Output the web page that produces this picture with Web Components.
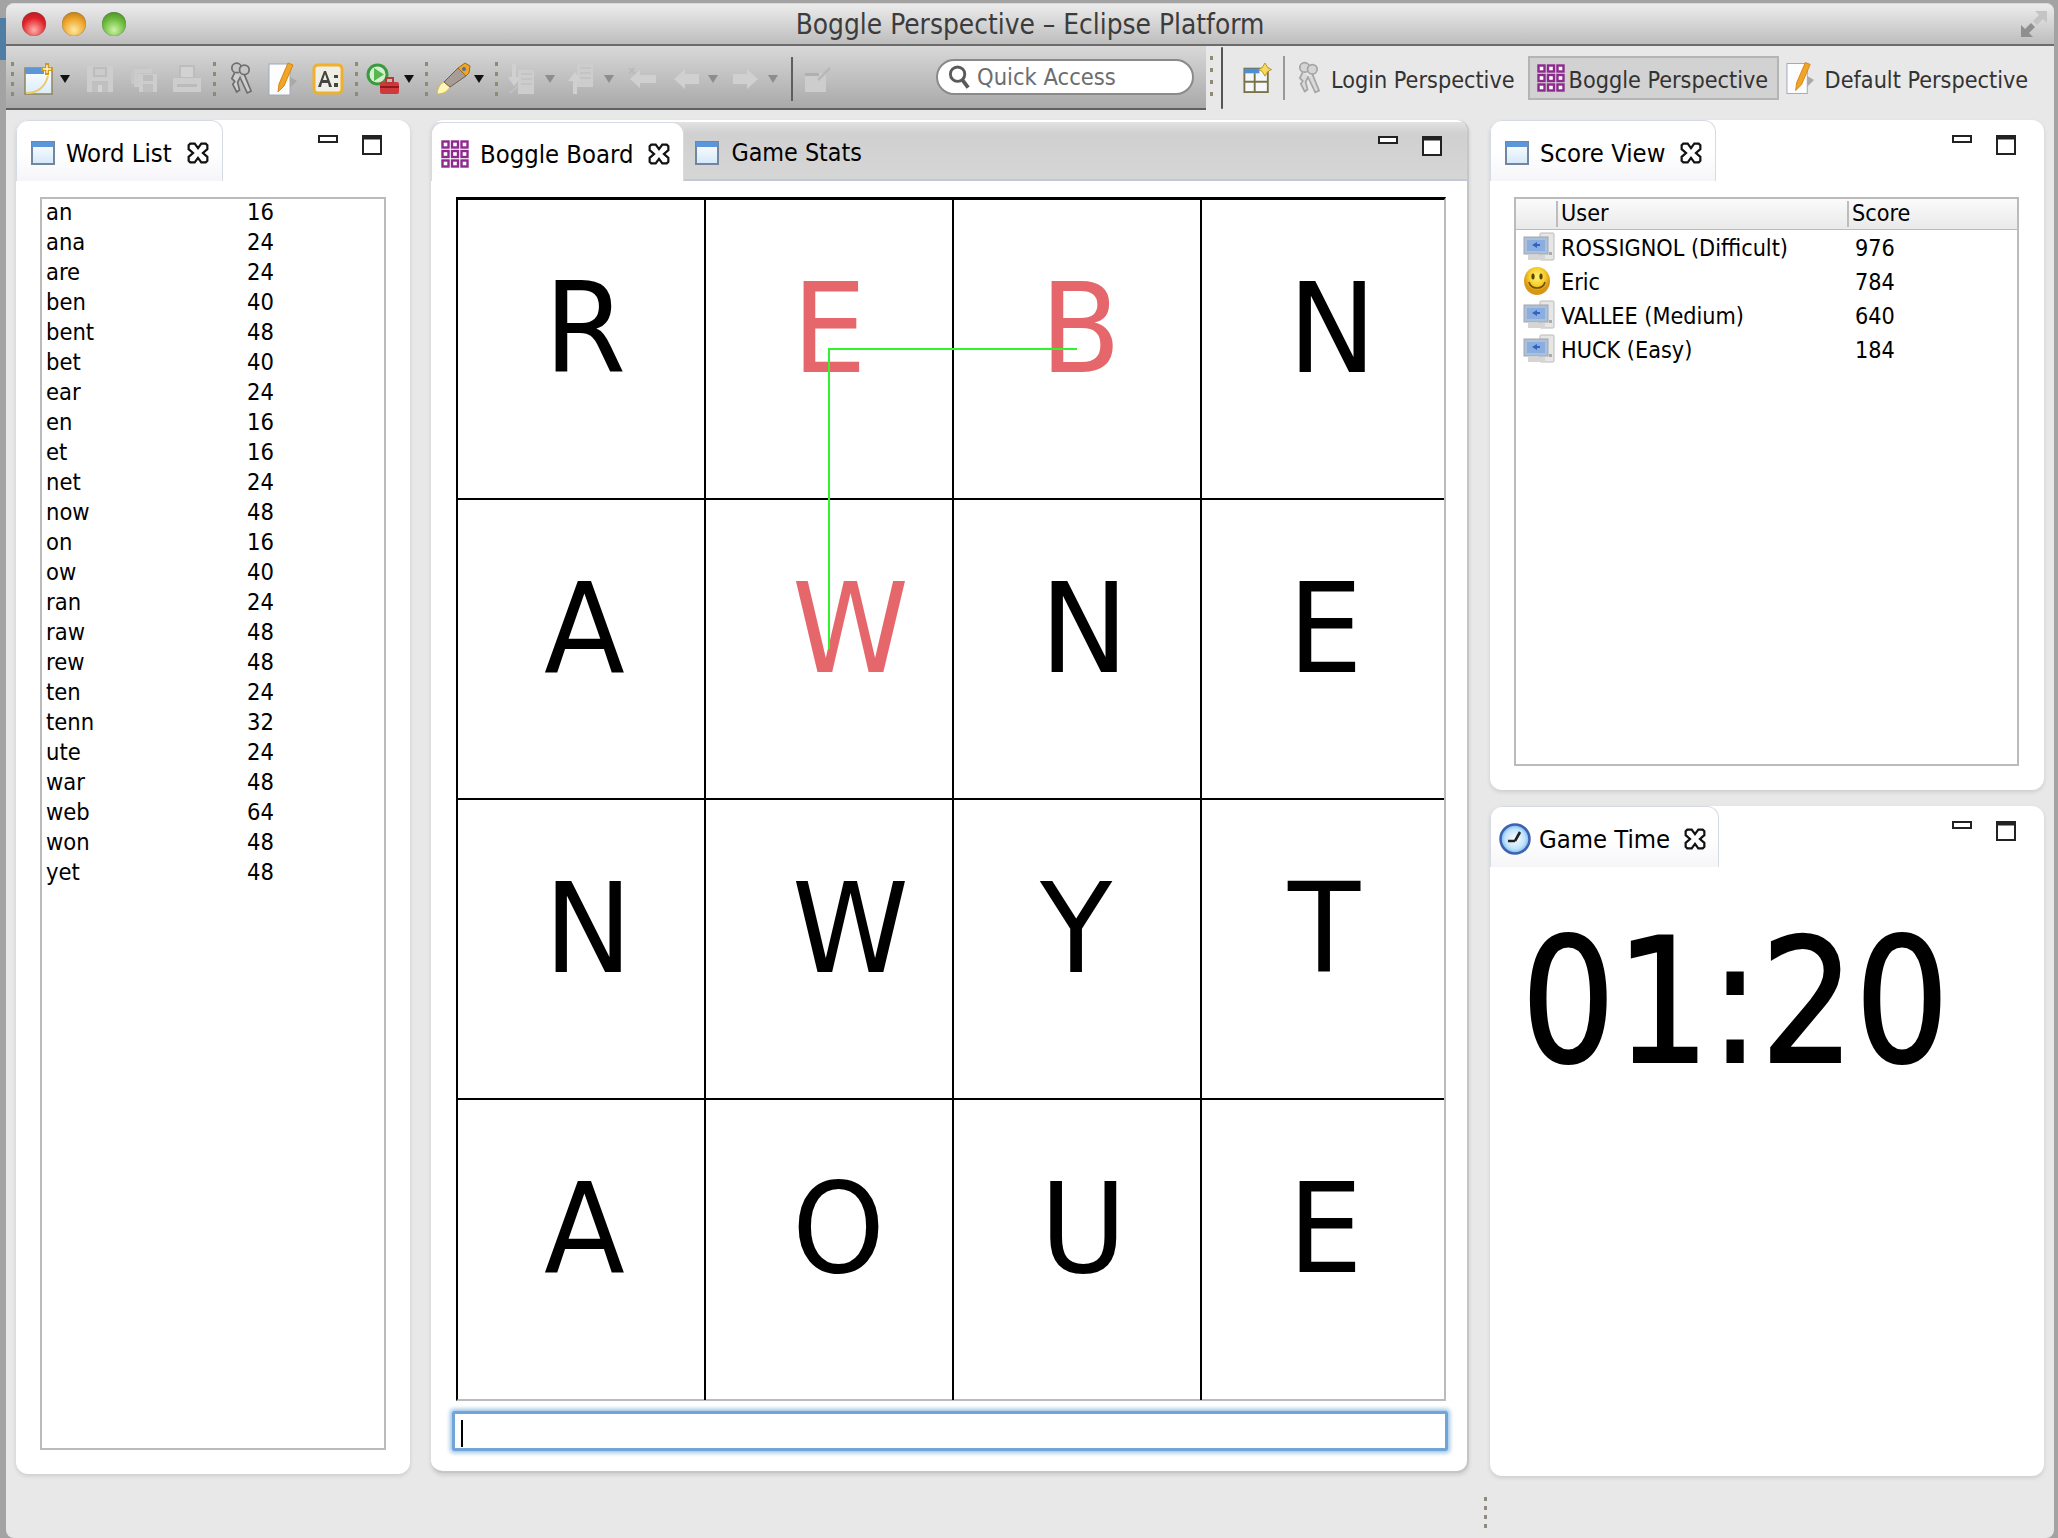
<!DOCTYPE html>
<html>
<head>
<meta charset="utf-8">
<title>Boggle Perspective - Eclipse Platform</title>
<style>
    html, body { margin: 0; height: 100%; overflow: hidden; }
    body {
        width: 2058px;
        height: 1538px;
        padding: 3px 4px 0 6px;
        box-sizing: border-box;
        background: linear-gradient(#4f7da3, #4f7da3) 0 18px / 6px 42px no-repeat, #a3a3a3;
        font-family: "DejaVu Sans", sans-serif;
        font-stretch: condensed;
        font-size: 23.5px;
    }
</style>
</head>
<body>
<eclipse-window>
    <title-bar>Boggle Perspective – Eclipse Platform</title-bar>
    <div slot="bars" style="display:flex">
        <main-toolbar></main-toolbar>
        <perspective-bar></perspective-bar>
    </div>
    <view-panel slot="left" tab="Word List" icon="window" style="width:394px;height:1354px">
        <word-list></word-list>
    </view-panel>
    <view-panel slot="center" tab="Boggle Board" icon="grid" extra="Game Stats" style="width:1038px;height:1353px">
        <boggle-board letters="REBNAWNENWYTAOUE" marked="1,2,5"></boggle-board>
    </view-panel>
    <view-panel slot="right" tab="Score View" icon="window" style="width:554px;height:670px">
        <score-table></score-table>
    </view-panel>
    <view-panel slot="right" tab="Game Time" icon="clock" style="width:554px;height:670px">
        <game-timer>01:20</game-timer>
    </view-panel>
</eclipse-window>

<script>
const gripDots = (n, gap) => {
    let dots = '';
    for (let i = 0; i < n; i++) {
        dots += `<rect x="1" y="${i * gap}" width="3" height="4" fill="#8f8b70"/>`;
    }
    return dots;
};

const computerIcon = `<svg viewBox="0 0 32 30"><rect x="17" y="1" width="14" height="27" rx="1" fill="#e6e6e6" stroke="#bbb"/><rect x="26" y="20" width="3" height="3" fill="#aaa"/><rect x="1" y="5" width="24" height="17" fill="#a9c0df" stroke="#a5a5a5"/><rect x="4" y="8" width="18" height="11" fill="#8caede"/><path d="M9 13l5-3v2h3v2h-3v2z" fill="#2f64c4"/><rect x="5" y="23" width="17" height="5" fill="#d5d5d5"/></svg>`;

const ICONS = {
    window: `<svg viewBox="0 0 24 24"><defs><linearGradient id="a" x1="0" y1="0" x2="0" y2="1"><stop offset="0" stop-color="#fff"/><stop offset="1" stop-color="#d4e8f8"/></linearGradient></defs><rect x="1" y="1" width="22" height="22" fill="url(#a)" stroke="#73869f" stroke-width="2"/><rect x="1" y="1" width="22" height="5" fill="#5a96d8"/></svg>`,
    grid: `<svg viewBox="0 0 28 28"><g fill="#fff" stroke="#8e2a8e" stroke-width="2.4"><rect x="1.5" y="1.5" width="6" height="6"/><rect x="11" y="1.5" width="6" height="6"/><rect x="20.5" y="1.5" width="6" height="6"/><rect x="1.5" y="11" width="6" height="6"/><rect x="11" y="11" width="6" height="6"/><rect x="20.5" y="11" width="6" height="6"/><rect x="1.5" y="20.5" width="6" height="6"/><rect x="11" y="20.5" width="6" height="6"/><rect x="20.5" y="20.5" width="6" height="6"/></g></svg>`,
    close: `<svg viewBox="0 0 20 20"><path d="M3 1.5H7L10 5.5 13 1.5H17L18.5 3V6.5L14.5 10 18.5 13.5V17L17 18.5H13L10 14.5 7 18.5H3L1.5 17V13.5L5.5 10 1.5 6.5V3Z" fill="#fff" stroke="#111" stroke-width="2"/></svg>`,
    min: `<svg viewBox="0 0 20 8"><rect x="1" y="1" width="18" height="6" fill="#fff" stroke="#222" stroke-width="2"/></svg>`,
    max: `<svg viewBox="0 0 20 20"><rect x="1" y="1" width="18" height="18" fill="#fff" stroke="#222" stroke-width="2"/><rect x="1" y="1" width="18" height="3.5" fill="#222"/></svg>`,
    clock: `<svg viewBox="0 0 32 32"><defs><radialGradient id="c"><stop offset="0" stop-color="#fff"/><stop offset=".7" stop-color="#bfe2fb"/><stop offset="1" stop-color="#6fb3ee"/></radialGradient></defs><circle cx="16" cy="16" r="14.5" fill="url(#c)" stroke="#3d62b0" stroke-width="2.5"/><path d="M16 18L21 9M16 18H9" stroke="#222" stroke-width="2.6" fill="none"/></svg>`,
    smile: `<svg viewBox="0 0 28 30"><defs><radialGradient id="s" cy=".35"><stop offset="0" stop-color="#fff27a"/><stop offset=".6" stop-color="#f8d02c"/><stop offset="1" stop-color="#d99616"/></radialGradient></defs><ellipse cx="14" cy="15" rx="13" ry="14" fill="url(#s)"/><ellipse cx="10" cy="10.5" rx="1.6" ry="3" fill="#5a4300"/><ellipse cx="18" cy="10.5" rx="1.6" ry="3" fill="#5a4300"/><path d="M6 16c2 8 14 8 16 0" fill="none" stroke="#6b5200" stroke-width="1.6"/></svg>`,
    computer: computerIcon,
    wizard: `<svg viewBox="0 0 30 32"><defs><linearGradient id="w" x1="0" y1="0" x2="0" y2="1"><stop offset="0" stop-color="#fff"/><stop offset="1" stop-color="#d8ecfa"/></linearGradient></defs><rect x="1" y="5" width="27" height="26" fill="url(#w)" stroke="#8f8660" stroke-width="1.5"/><rect x="1" y="5" width="19" height="6" fill="#5d95d6"/><path d="M2 30c12 0 19-6 22-17" fill="none" stroke="#eccb68" stroke-width="2"/><path d="M23 0v12M17 6h12" stroke="#d09a1c" stroke-width="4"/><path d="M23 2v8M19 6h8" stroke="#fff6d0" stroke-width="1.4"/></svg>`,
    save: `<svg viewBox="0 0 28 28"><path d="M1 1H27V27H1Z" fill="#cdcdcd"/><rect x="7" y="2" width="14" height="10" fill="#bdbdbd"/><rect x="9" y="4" width="10" height="6" fill="#cbcbcb"/><rect x="6" y="16" width="16" height="11" fill="#c0c0c0"/><rect x="12" y="20" width="4" height="7" fill="#d4d4d4"/></svg>`,
    saveall: `<svg viewBox="0 0 28 28"><path d="M1 1H18V5H6V19H1Z" fill="#c6c6c6"/><path d="M4 4H22V8H9V22H4Z" fill="#cbcbcb"/><path d="M9 9H27V27H9Z" fill="#cdcdcd"/><rect x="13" y="10" width="10" height="6" fill="#bdbdbd"/><rect x="13" y="19" width="10" height="8" fill="#bfbfbf"/></svg>`,
    print: `<svg viewBox="0 0 30 28"><path d="M8 1H22V13H8Z" fill="#d2d2d2" stroke="#bdbdbd" stroke-width="2"/><path d="M1 13H29V27H1Z" fill="#cdcdcd"/><rect x="5" y="19" width="20" height="3" fill="#bbb"/></svg>`,
    keys: `<svg viewBox="0 0 26 34"><g fill="none" stroke="#6f6f6f" stroke-width="1.8"><circle cx="9" cy="6" r="5" fill="#c6c6c6"/><circle cx="17" cy="8" r="5" fill="#c6c6c6"/><path d="M7 11L4 17l3 3-2 3 4 8 3-2-2-8 3-6M17 13l7 17-4 2-7-15" fill="#cfcfcf"/></g></svg>`,
    note: `<svg viewBox="0 0 30 34"><rect x="1" y="2" width="21" height="31" fill="#fdfdfd" stroke="#9ea8ba"/><path d="M22 15l7 4-7 7z" fill="#a9a9a9"/><path d="M20 1l5 2-9 21-6 6 1-8z" fill="#f0a428" stroke="#d8861a"/></svg>`,
    textbox: `<svg viewBox="0 0 32 32"><rect x="2" y="2" width="28" height="28" rx="4" fill="#efefe6" stroke="#f0b02c" stroke-width="3"/><path d="M6 24L12 8h2l6 16h-3l-1-4h-6l-1 4zM11 17h4l-2-6z" fill="#444"/><path d="M22 12h4v3h-4zM22 20h4v4h-4z" fill="#444"/></svg>`,
    run: `<svg viewBox="0 0 33 31"><circle cx="11.500" cy="11.500" r="11" fill="#3b9a3f"/><circle cx="11.500" cy="11.500" r="8" fill="#d6f0cf"/><path d="M8 5l10 6.500-10 6.500z" fill="#52b84f"/><rect x="14" y="19" width="19" height="12" rx="2" fill="#d0383c"/><rect x="20" y="15" width="7" height="5" fill="none" stroke="#b8383c" stroke-width="2"/><rect x="14" y="23" width="19" height="2" fill="#8e1a1e"/></svg>`,
    brush: `<svg viewBox="0 0 35 33"><path d="M1 32c1-7 3-10 7-12l6 5c-3 5-7 7-13 7z" fill="#fff6b8" stroke="#d8b840"/><path d="M8 20L22 6l8 8-16 11z" fill="#a89c96" stroke="#6e5e50"/><path d="M22 6l7-5 5 3-1 7-3 3z" fill="#f0a428" stroke="#9c6c12"/><circle cx="28" cy="7" r="2" fill="#4a6fb5"/></svg>`,
    nextann: `<svg viewBox="0 0 26 31"><rect x="10" y="7" width="16" height="24" fill="#cdcdcd"/><path d="M13 11h11M13 16h11M13 21h11" stroke="#bbb"/><path d="M8 1v13h5l-7 9-6-9h4V1z" fill="#d0d0d0"/><path d="M2 30l8-7" stroke="#c0c0c0" stroke-width="2"/></svg>`,
    prevann: `<svg viewBox="0 0 26 31"><rect x="10" y="1" width="16" height="23" fill="#cdcdcd"/><path d="M13 5h11M13 10h11M13 15h11" stroke="#bbb"/><path d="M6 31V18H1l7-9 6 9h-4v13z" fill="#d0d0d0"/></svg>`,
    backedit: `<svg viewBox="0 0 30 24"><path d="M3 12l10-9v5h16v8H13v5z" fill="#d0d0d0"/><path d="M2 1l6 6M7 1L2 7" stroke="#b8b8b8" stroke-width="1.500"/></svg>`,
    back: `<svg viewBox="0 0 26 22"><path d="M1 11L12 1v5h14v10H12v5z" fill="#d0d0d0"/></svg>`,
    forward: `<svg viewBox="0 0 26 22"><path d="M25 11L14 1v5H0v10h14v5z" fill="#d0d0d0"/></svg>`,
    pin: `<svg viewBox="0 0 26 26"><rect x="0" y="7" width="21" height="19" fill="#cdcdcd"/><rect x="0" y="7" width="14" height="3" fill="#b0b0b0"/><path d="M13 14L25 2" stroke="#b8b8b8" stroke-width="2.500"/></svg>`,
    perspective: `<svg viewBox="0 0 30 32"><rect x="1" y="6" width="25" height="25" fill="#f4f8fb" stroke="#7b7346" stroke-width="2"/><rect x="1" y="6" width="16" height="5" fill="#4f8ed6"/><path d="M1 20H26M12 11V31" stroke="#7b7346" stroke-width="2"/><path d="M23 0l3 5 4 2-4 2-3 5-3-5-4-2 4-2z" fill="#f7d860" stroke="#b8941c"/></svg>`,
    search: `<svg viewBox="0 0 24 26"><circle cx="10" cy="10" r="7.500" fill="#fff" stroke="#5a5a5a" stroke-width="3"/><path d="M15 16l6 8" stroke="#5a5a5a" stroke-width="4"/></svg>`,
    expand: `<svg viewBox="0 0 28 28"><path d="M15 1H27V13L23 9 17 15 13 11 19 5z" fill="#c4c4c4"/><path d="M13 27H1V15L5 19 11 13 15 17 9 23z" fill="#8f8f8f"/></svg>`
};

class UiIcon extends HTMLElement {
    constructor() {
        super();
        this.attachShadow({ mode: 'open' });
        const size = this.getAttribute('size') || '24';
        const [w, h] = size.split('x');
        this.shadowRoot.innerHTML = `
            <style>
                :host { display: inline-block; width: ${w}px; height: ${h || w}px; flex: none; line-height: 0; }
                svg { width: 100%; height: 100%; display: block; }
            </style>
            ${ICONS[this.getAttribute('name')] || ''}
        `;
    }
}

class TitleBar extends HTMLElement {
    constructor() {
        super();
        this.attachShadow({ mode: 'open' });
        this.shadowRoot.innerHTML = `
            <style>
                :host {
                    display: flex;
                    align-items: center;
                    height: 40px;
                    border-top: 1px solid #d8d8d8;
                    border-bottom: 2px solid #6c6c6c;
                    border-radius: 8px 8px 0 0;
                    background: linear-gradient(#ececec, #bdbdbd);
                    color: #3c3c3c;
                    padding-left: 16px;
                }
                .lights { display: flex; gap: 16px; }
                .light { width: 24px; height: 24px; border-radius: 50%; box-shadow: 0 0 1px #555 inset; }
                .red { background: radial-gradient(circle at 50% 75%, #ffb0a8, #e0222a 55%, #a01820); }
                .amber { background: radial-gradient(circle at 50% 75%, #ffe9a0, #eda227 55%, #a86c12); }
                .green { background: radial-gradient(circle at 50% 75%, #ccf3a6, #69b83a 55%, #3f7d20); }
                .text { position: absolute; left: 0; right: 0; text-align: center; font-size: 27.8px; }
                ui-icon { margin-left: auto; margin-right: 6px; }
            </style>
            <div class="lights"><span class="light red"></span><span class="light amber"></span><span class="light green"></span></div>
            <span class="text"><slot></slot></span>
            <ui-icon name="expand" size="28"></ui-icon>
        `;
    }
}

class MainToolbar extends HTMLElement {
    constructor() {
        super();
        this.attachShadow({ mode: 'open' });
        // name, left edge in the window, size of the icon
        const items = [
            ['grip', 10], ['wizard', 24, '30x32'], ['drop', 60], ['save', 86, '28x28'], ['saveall', 130, '28x28'], ['print', 172, '30x28'],
            ['grip', 212], ['keys', 228, '25x33'], ['note', 268, '30x34'], ['textbox', 312, '32x32'],
            ['grip', 354], ['run', 366, '33x31'], ['drop', 404], ['grip', 424], ['brush', 436, '35x33'], ['drop', 474],
            ['grip', 494], ['nextann', 508, '26x31'], ['lightdrop', 545], ['prevann', 567, '26x31'], ['lightdrop', 604],
            ['backedit', 627, '30x24'], ['back', 673, '26x22'], ['lightdrop', 708], ['forward', 733, '26x22'], ['lightdrop', 768],
            ['sep', 791], ['pin', 805, '26x26']
        ];
        const width = { grip: 4, drop: 10, lightdrop: 10, sep: 2 };
        let x = 6;
        const html = items.map(([name, left, size]) => {
            const margin = left - x;
            const w = size ? parseInt(size) : width[name];
            x = left + w;
            const style = `margin-left:${margin}px`;
            if (name === 'grip') return `<span class="grip" style="${style}"><svg width="4" height="34">${gripDots(4, 10)}</svg></span>`;
            if (name === 'drop') return `<span class="drop" style="${style}"></span>`;
            if (name === 'lightdrop') return `<span class="drop light" style="${style}"></span>`;
            if (name === 'sep') return `<span class="sep" style="${style}"></span>`;
            return `<ui-icon name="${name}" size="${size}" style="${style}"></ui-icon>`;
        }).join('');
        this.shadowRoot.innerHTML = `
            <style>
                :host {
                    display: flex;
                    align-items: center;
                    box-sizing: border-box;
                    width: 1200px;
                    height: 64px;
                    padding-top: 3px;
                    border-bottom: 2px solid #5f5f5f;
                    background: linear-gradient(#d8d8d8, #a9a9a9);
                    position: relative;
                }
                .grip { display: flex; width: 4px; }
                .drop { width: 0; height: 0; border: 5px solid transparent; border-top: 8px solid #111; border-bottom: 0; }
                .drop.light { border-top-color: #8d8d8d; }
                .sep { width: 2px; height: 44px; background: #5e5e5e; }
                .quick {
                    display: flex;
                    align-items: center;
                    box-sizing: border-box;
                    margin: -3px 0 0 105px;
                    width: 258px;
                    height: 36px;
                    padding-left: 10px;
                    border: 2px solid #8a8a8a;
                    border-radius: 18px;
                    background: #fff;
                    color: #6d6d6d;
                    gap: 6px;
                }
            </style>
            ${html}
            <div class="quick"><ui-icon name="search" size="23x26"></ui-icon><span>Quick Access</span></div>
        `;
    }
}

class PerspectiveBar extends HTMLElement {
    constructor() {
        super();
        this.attachShadow({ mode: 'open' });
        this.shadowRoot.innerHTML = `
            <style>
                :host {
                    display: flex;
                    align-items: center;
                    flex: 1;
                    height: 64px;
                    color: #333;
                    position: relative;
                    background: #e8e8e8;
                    white-space: nowrap;
                    font-size: 23.2px;
                }
                .grip { margin-left: 3px; display: flex; }
                .curve { margin-left: 8px; width: 2px; height: 62px; background: #555; border-radius: 2px; }
                .sep { width: 2px; height: 44px; background: #999; margin: 0 11px 0 11px; }
                .persp { display: flex; align-items: center; gap: 10px; height: 44px; box-sizing: border-box; }
                .persp span { padding-top: 3px; }
                .on { margin-left: 13px; padding: 0 10px 0 7px; width: 251px; background: #d2d2d2; border: 2px solid #b4b4b4; gap: 4px; }
                .faded { opacity: .55; }
            </style>
            <span class="grip"><svg width="4" height="44">${gripDots(4, 12)}</svg></span>
            <span class="curve"></span>
            <ui-icon name="perspective" size="29x30" style="margin-left:20px"></ui-icon>
            <span class="sep"></span>
            <div class="persp"><ui-icon class="faded" name="keys" size="25x34"></ui-icon><span>Login Perspective</span></div>
            <div class="persp on"><ui-icon name="grid" size="28"></ui-icon><span>Boggle Perspective</span></div>
            <div class="persp" style="margin-left:7px"><ui-icon name="note" size="29x34"></ui-icon><span>Default Perspective</span></div>
        `;
    }
}

class EclipseWindow extends HTMLElement {
    constructor() {
        super();
        this.attachShadow({ mode: 'open' });
        this.shadowRoot.innerHTML = `
            <style>
                :host {
                    display: flex;
                    flex-direction: column;
                    height: 1535px;
                    background: #e8e8e8;
                    border-radius: 8px;
                    overflow: hidden;
                    position: relative;
                }
                .main {
                    display: flex;
                    align-items: flex-start;
                    gap: 21px;
                    padding: 10px 0 0 10px;
                }
                .col { display: flex; flex-direction: column; gap: 16px; }
                .sash { position: absolute; left: 1478px; top: 1494px; display: flex; flex-direction: column; gap: 5px; }
                .sash i { display: block; width: 3px; height: 4px; background: #8f8b80; }
            </style>
            <slot></slot>
            <slot name="bars"></slot>
            <div class="main">
                <slot name="left"></slot>
                <slot name="center"></slot>
                <div class="col"><slot name="right"></slot></div>
            </div>
            <div class="sash"><i></i><i></i><i></i><i></i></div>
        `;
    }
}

class ViewPanel extends HTMLElement {
    constructor() {
        super();
        this.attachShadow({ mode: 'open' });
        const tab = this.getAttribute('tab');
        const icon = this.getAttribute('icon');
        const extra = this.getAttribute('extra');
        const iconSize = icon === 'grid' ? 28 : icon === 'clock' ? 32 : 24;
        this.shadowRoot.innerHTML = `
            <style>
                :host {
                    display: flex;
                    flex-direction: column;
                    box-sizing: border-box;
                    background: #fff;
                    border-radius: 12px;
                    box-shadow: 0 2px 4px rgba(0, 0, 0, 0.12);
                    overflow: hidden;
                    font-size: 25.4px;
                }
                :host([extra]) { border-right: 2px solid #c6c6c6; border-bottom: 2px solid #c6c6c6; }
                .bar { display: flex; height: 61px; flex: none; position: relative; }
                :host([extra]) .bar {
                    background: linear-gradient(#e2e2e2, #d0d0d0 20%, #d6d6d6);
                    border-bottom: 2px solid #c3c8d8;
                    height: 57px;
                    margin-top: 2px;
                }
                .tab {
                    display: flex;
                    align-items: center;
                    gap: 11px;
                    padding: 4px 13px 0 14px;
                    background: linear-gradient(#fff 50%, #f6f6f9);
                    border: 1px solid #d6dae5;
                    border-bottom: 0;
                    border-radius: 12px 12px 0 0;
                    box-sizing: border-box;
                    color: #000;
                }
                :host([extra]) .tab { background: #fff; margin-bottom: -2px; padding-left: 9px; }
                .tab ui-icon:last-child { margin-left: 4px; }
                :host([icon="clock"]) .tab { padding-left: 8px; gap: 8px; padding-right: 12px; }
                :host([icon="clock"]) .tab ui-icon:last-child { margin-left: 6px; }
                .other { display: flex; align-items: center; gap: 12px; padding: 4px 0 0 11px; color: #000; font-size: 24.8px; }
                .ctl { position: absolute; top: 15px; right: 28px; display: flex; gap: 24px; }
                :host([extra]) .ctl { top: 14px; right: 25px; }
                .body { flex: 1; min-height: 0; position: relative; font-size: 23.5px; }
            </style>
            <div class="bar">
                <div class="tab"><ui-icon name="${icon}" size="${iconSize}"></ui-icon><span>${tab}</span><ui-icon name="close" size="22"></ui-icon></div>
                ${extra ? `<div class="other"><ui-icon name="window" size="24"></ui-icon><span>${extra}</span></div>` : ''}
                <div class="ctl"><ui-icon name="min" size="20x8"></ui-icon><ui-icon name="max" size="20"></ui-icon></div>
            </div>
            <div class="body"><slot></slot></div>
        `;
    }
}

class WordList extends HTMLElement {
    constructor() {
        super();
        this.attachShadow({ mode: 'open' });
        const words = [['an', 16], ['ana', 24], ['are', 24], ['ben', 40], ['bent', 48], ['bet', 40], ['ear', 24], ['en', 16], ['et', 16], ['net', 24], ['now', 48], ['on', 16], ['ow', 40], ['ran', 24], ['raw', 48], ['rew', 48], ['ten', 24], ['tenn', 32], ['ute', 24], ['war', 48], ['web', 64], ['won', 48], ['yet', 48]];
        this.shadowRoot.innerHTML = `
            <style>
                :host {
                    display: block;
                    box-sizing: border-box;
                    width: 346px;
                    height: 1253px;
                    margin: 16px 0 0 24px;
                    border: 2px solid #bbb;
                    color: #000;
                }
                .rows { margin-top: -2px; }
                .row { display: grid; grid-template-columns: 201px 1fr; height: 30px; line-height: 30px; padding-left: 4px; }
            </style>
            <div class="rows">${words.map(w => `<div class="row"><span>${w[0]}</span><span>${w[1]}</span></div>`).join('')}</div>
        `;
    }
}

class BoggleBoard extends HTMLElement {
    constructor() {
        super();
        this.attachShadow({ mode: 'open' });
        const letters = this.getAttribute('letters').split('');
        const marked = this.getAttribute('marked').split(',').map(Number);
        this.shadowRoot.innerHTML = `
            <style>
                :host { display: block; padding: 16px 21px 0 25px; }
                .board {
                    position: relative;
                    display: grid;
                    grid-template-columns: repeat(3, 248px) 1fr;
                    grid-template-rows: repeat(4, 300px);
                    box-sizing: border-box;
                    height: 1204px;
                    border-top: 3px solid #000;
                    border-left: 2px solid #000;
                    border-right: 2px solid #bbb;
                    border-bottom: 2px solid #bbb;
                }
                .cell {
                    box-sizing: border-box;
                    border-right: 2px solid #000;
                    border-bottom: 2px solid #000;
                    font-size: 125px;
                    font-stretch: normal;
                    line-height: 146px;
                    padding: 56px 0 0 86px;
                    color: #000;
                }
                .cell span { display: inline-block; transform: scaleX(.945); transform-origin: 0 50%; }
                .cell:nth-child(4n) { border-right: 0; }
                .cell:nth-child(n+13) { border-bottom: 0; }
                .hit { color: #e5676b; }
                svg { position: absolute; left: 0; top: 0; pointer-events: none; }
                .entry {
                    box-sizing: border-box;
                    height: 40px;
                    margin: 10px -2px 0 -4px;
                    border: 3px solid #6fa5d8;
                    border-radius: 2px;
                    box-shadow: 0 0 4px 2px #9cc3e6;
                    padding: 6px 0 0 6px;
                }
                .caret { display: block; width: 2px; height: 27px; background: #000; }
            </style>
            <div class="board">
                ${letters.map((l, i) => `<div class="cell${marked.includes(i) ? ' hit' : ''}"><span>${l}</span></div>`).join('')}
                <svg width="985" height="1200"><path d="M619 149H371V449" fill="none" stroke="#2ef52e" stroke-width="2"/></svg>
            </div>
            <div class="entry"><span class="caret"></span></div>
        `;
    }
}

class ScoreTable extends HTMLElement {
    constructor() {
        super();
        this.attachShadow({ mode: 'open' });
        const rows = [['computer', 'ROSSIGNOL (Difficult)', 976], ['smile', 'Eric', 784], ['computer', 'VALLEE (Medium)', 640], ['computer', 'HUCK (Easy)', 184]];
        this.shadowRoot.innerHTML = `
            <style>
                :host {
                    display: block;
                    box-sizing: border-box;
                    width: 505px;
                    height: 569px;
                    margin: 16px 0 0 24px;
                    border: 2px solid #bbb;
                    color: #000;
                    font-size: 23.2px;
                }
                .row { display: grid; grid-template-columns: 40px 291px 1fr; align-items: center; height: 34px; }
                .head {
                    height: 30px;
                    border-bottom: 1px solid #bbb;
                    background: linear-gradient(#fbfbfb, #e9e9e9);
                }
                .head span { border-left: 2px solid #bdbdbd; padding-left: 3px; line-height: 23px; height: 26px; }
                .head span:first-child { border: 0; }
                .row span:nth-child(2) { padding-left: 5px; }
                .row span:nth-child(3) { padding-left: 8px; }
                .head span:nth-child(n+2) { padding-left: 3px; }
                .row ui-icon { margin-left: 7px; }
            </style>
            <div class="row head"><span></span><span>User</span><span>Score</span></div>
            ${rows.map(r => `<div class="row"><ui-icon name="${r[0]}" size="${r[0] === 'smile' ? '28x30' : '32x30'}"></ui-icon><span>${r[1]}</span><span>${r[2]}</span></div>`).join('')}
        `;
    }
}

class GameTimer extends HTMLElement {
    constructor() {
        super();
        this.attachShadow({ mode: 'open' });
        this.shadowRoot.innerHTML = `
            <style>
                :host {
                    display: block;
                    padding: 35px 0 0 31px;
                    font-size: 173px;
                    line-height: 200px;
                    color: #000;
                    -webkit-text-stroke: 2px #000;
                }
                span { display: inline-block; transform: scaleX(.955); transform-origin: 0 50%; }
            </style>
            <span><slot></slot></span>
        `;
    }
}

customElements.define('ui-icon', UiIcon);
customElements.define('title-bar', TitleBar);
customElements.define('main-toolbar', MainToolbar);
customElements.define('perspective-bar', PerspectiveBar);
customElements.define('eclipse-window', EclipseWindow);
customElements.define('view-panel', ViewPanel);
customElements.define('word-list', WordList);
customElements.define('boggle-board', BoggleBoard);
customElements.define('score-table', ScoreTable);
customElements.define('game-timer', GameTimer);
</script>
</body>
</html>
